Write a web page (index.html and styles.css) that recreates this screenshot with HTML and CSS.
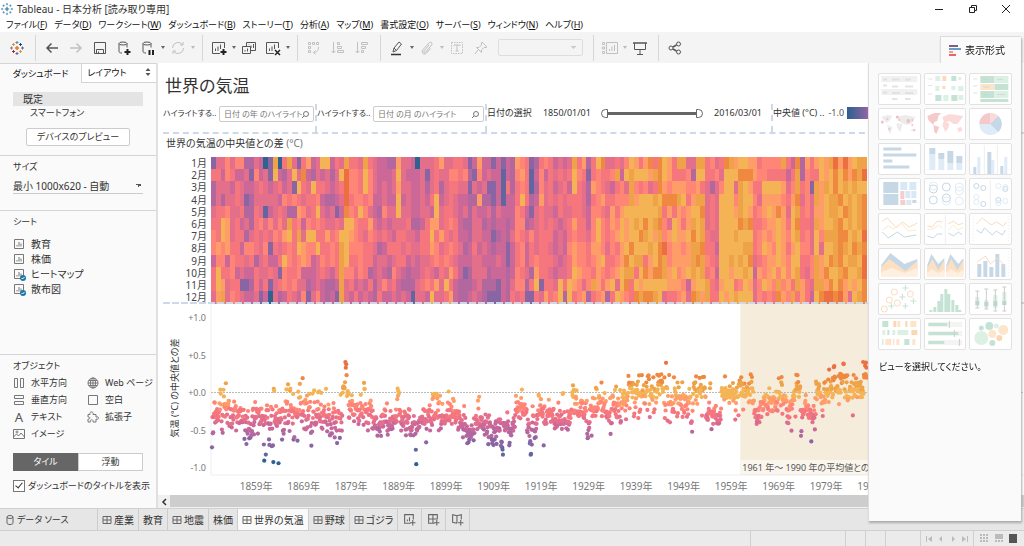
FILE: index.html
```html
<!DOCTYPE html>
<html lang="ja">
<head>
    <title>Tableau - 日本分析</title>
    <meta charset="utf-8">
    <link rel="stylesheet" href="styles.css">
</head>
<body>
    <header class="titlebar">
        <svg class="logo" width="12" height="12" viewBox="0 0 16 16"><path d="M8 5v6M5 8h6" stroke="#2f6ea5" stroke-width="1.5"/><path d="M8 0v3M6.500 1.500h3M8 13v3M6.500 14.500h3M1.500 6.500v3M0 8h3M14.500 6.500v3M13 8h3M3.500 2v3M2 3.500h3M12.500 2v3M11 3.500h3M3.500 11v3M2 12.500h3M12.500 11v3M11 12.500h3" stroke="#3f86ad"/></svg>
        <span class="title">Tableau - 日本分析 [読み取り専用]</span>
        <div class="window-buttons">
            <button aria-label="最小化"><svg width="10" height="10"><path d="M1 5.500h8" stroke="#222"/></svg></button>
            <button aria-label="元に戻す"><svg width="10" height="10" fill="none" stroke="#222"><path d="M1.500 3.500h5v5h-5zM3.500 3V1.500h5v5H7"/></svg></button>
            <button aria-label="閉じる"><svg width="10" height="10"><path d="M1 1l8 8M9 1L1 9" stroke="#222"/></svg></button>
        </div>
    </header>
    <nav class="menubar">
        <button>ファイル(<u>F</u>)</button>
        <button>データ(<u>D</u>)</button>
        <button>ワークシート(<u>W</u>)</button>
        <button>ダッシュボード(<u>B</u>)</button>
        <button>ストーリー(<u>T</u>)</button>
        <button>分析(<u>A</u>)</button>
        <button>マップ(<u>M</u>)</button>
        <button>書式設定(<u>O</u>)</button>
        <button>サーバー(<u>S</u>)</button>
        <button>ウィンドウ(<u>N</u>)</button>
        <button>ヘルプ(<u>H</u>)</button>
    </nav>
    <div class="toolbar">
        <button class="tool" aria-label="スタート ページ"><svg width="14" height="14" viewBox="0 0 14 14"><path d="M7 5v4M5 7h4" stroke="#e8762c" stroke-width="1.500"/><path d="M7 0v3M5.500 1.500h3M1.500 5.500v3M0 7h3" stroke="#5b879b"/><path d="M7 11v3M5.500 12.500h3M12.500 5.500v3M11 7h3" stroke="#5c6692"/><path d="M3.500 2v3M2 3.500h3" stroke="#eb912c"/><path d="M10.500 2v3M9 3.500h3" stroke="#1f457e"/><path d="M3.500 9v3M2 10.500h3" stroke="#c72035"/><path d="M10.500 9v3M9 10.500h3" stroke="#eb912c"/></svg></button>
        <span class="sep"></span>
        <button class="tool" aria-label="元に戻す"><svg><path d="M14 8H3M7.500 3.500L3 8l4.500 4.500" stroke-width="1.500"/></svg></button>
        <button class="tool off" aria-label="やり直し"><svg><path d="M2 8h11M8.500 3.500L13 8l-4.500 4.500" stroke-width="1.500"/></svg></button>
        <button class="tool" aria-label="保存"><svg><path d="M2.500 2.500h11v11h-11zM4.500 13V9.500h7V13M6.500 11.500v2"/></svg></button>
        <button class="tool" aria-label="新しいデータ ソース"><svg><ellipse cx="7" cy="3.500" rx="4" ry="1.500"/><path d="M3 3.500v8c0 1 1 1.500 3 1.500M11 3.500v4"/><path d="M11.500 9v6M8.500 12h6" stroke="#222" stroke-width="2"/></svg></button>
        <button class="tool" aria-label="自動更新の一時停止"><svg><ellipse cx="7" cy="3.500" rx="4" ry="1.500"/><path d="M3 3.500v8c0 1 1 1.500 3 1.500M11 3.500v4"/><path d="M9.500 10v5M13 10v5" stroke="#222" stroke-width="2"/></svg></button>
        <span class="caret"></span>
        <button class="tool off" aria-label="更新"><svg><path d="M2.500 8a5.500 5.500 0 0 1 10-3.200M13.500 8a5.500 5.500 0 0 1-10 3.200M13 2v3h-3M3 14v-3h3"/></svg></button>
        <span class="caret off"></span>
        <span class="sep"></span>
        <button class="tool" aria-label="新しいワークシート"><svg><path d="M9 13.500H1.500v-11h12V8M4.500 11V8.500M7 11V6.500M9.500 9V4.500"/><path d="M12.500 9v6M9.500 12h6" stroke="#222" stroke-width="2"/></svg></button>
        <span class="caret"></span>
        <button class="tool" aria-label="複製"><svg><path d="M5.500 6V2.500h9v8H10M1.500 6.500h8v7h-8zM8 5V4.500M10 8V5.500M12.500 8V4M4 11.500V10M6.500 11.500V8.500"/></svg></button>
        <button class="tool" aria-label="クリア"><svg><path d="M9 13.500H1.500v-11h12V8M4.500 11V8.500M7 11V6.500M9.500 9V4.500"/><path d="M10 10l5 5M15 10l-5 5" stroke="#222" stroke-width="1.500"/></svg></button>
        <span class="caret"></span>
        <span class="sep"></span>
        <button class="tool off" aria-label="行と列の入れ替え"><svg><path d="M2.500 2.500h2v2h-2zM6.500 2.500h2v2h-2zM10.500 2.500h2v2h-2zM2.500 6.500h2v2h-2zM2.500 10.500h2v2h-2zM12.500 7c0 4-2 5.500-5 5.500M9.500 10.500l-2 2 2 2"/></svg></button>
        <button class="tool off" aria-label="昇順"><svg><path d="M3.500 2v11M1.500 11l2 2 2-2M7.500 2.500h2v2h-2zM7.500 6.500h4v2h-4zM7.500 10.500h6v2h-6z"/></svg></button>
        <button class="tool off" aria-label="降順"><svg><path d="M3.500 2v11M1.500 11l2 2 2-2M7.500 2.500h6v2h-6zM7.500 6.500h4v2h-4zM7.500 10.500h2v2h-2z"/></svg></button>
        <span class="sep"></span>
        <button class="tool" aria-label="ハイライト"><svg><path d="M4 12l1-4 5-6 2.500 2-5 6.500zM5 8l2.500 2.500"/><path d="M2 14.500h10" stroke="#333" stroke-width="1.500"/></svg></button>
        <span class="caret"></span>
        <button class="tool off" aria-label="グループ"><svg><path d="M10 5l-5 6c-1 1.500.5 2.500 1.500 1.500l6-7.500c1.500-2-.5-4-2.500-2L4 9.500c-2 3 .5 6 3 4l4.500-5"/></svg></button>
        <span class="caret off"></span>
        <button class="tool off" aria-label="マーク ラベル"><svg><path d="M2.500 2.500h11v11h-11z" stroke-dasharray="1.500 1"/><path d="M5 6V5h6v1M8 5v6M6.500 11h3"/></svg></button>
        <button class="tool off" aria-label="固定"><svg><path d="M9 2l5 5-1 .5-2 0-2.500 2.500v2.500l-5-5h2.500L8.500 5V3zM5 10l-3 4"/></svg></button>
        <select class="fit" aria-label="サイズの調整" disabled></select>
        <span class="sep"></span>
        <button class="tool off" aria-label="カードの表示"><svg><path d="M.5 2.500h2v2h-2zM.5 7h2v2h-2zM.5 11.500h2v2h-2zM4.500 2.500h11v11h-11zM7.500 11V9M10 11V6.500M12.500 11V5"/></svg></button>
        <span class="caret off"></span>
        <button class="tool" aria-label="プレゼンテーション"><svg><path d="M1 3h14" stroke-width="1.500"/><path d="M2.500 3v6.500h11V3M8 10v4M5 14.500h6"/></svg></button>
        <span class="sep"></span>
        <button class="tool" aria-label="共有"><svg><circle cx="4" cy="8" r="2"/><circle cx="11.500" cy="4" r="2"/><circle cx="11.500" cy="12" r="2"/><path d="M6 7l3.500-2M6 9l3.500 2" stroke-width="1.500"/></svg></button>
    </div>

    <div class="workspace">
        <aside class="sidebar">
            <div class="side-tabs">
                <button class="side-tab active">ダッシュボード</button>
                <button class="side-tab">レイアウト <svg width="6" height="8" fill="#555"><path d="M3 0l2.500 3h-5zM3 8L.5 5h5z"/></svg></button>
            </div>
            <section class="device">
                <button class="device-row selected">既定</button>
                <button class="device-row phone">スマートフォン</button>
                <button class="preview">デバイスのプレビュー</button>
            </section>
            <section class="size">
                <h2><label for="size">サイズ</label></h2>
                <select id="size"><option>最小 1000x620 - 自動</option></select>
            </section>
            <section class="sheets">
                <h2>シート</h2>
                <ul>
                    <li><svg class="glyph" viewBox="0 0 12 12"><path d="M1.500 1.500h9v9h-9zM4 8.500V7M6 8.500V4M8 8.500V5.500"/></svg>教育</li>
                    <li><svg class="glyph" viewBox="0 0 12 12"><path d="M1.500 1.500h9v9h-9zM4 8.500V7M6 8.500V4M8 8.500V5.500"/></svg>株価</li>
                    <li class="used"><svg class="glyph" viewBox="0 0 12 12"><path d="M1.500 1.500h9v9h-9zM4 8.500V7M6 8.500V4M8 8.500V5.500"/><circle cx="10" cy="10" r="3" fill="#1f77a8" stroke="none"/><path d="M8.500 10l1 1 2-2" stroke="#fff"/></svg>ヒートマップ</li>
                    <li class="used"><svg class="glyph" viewBox="0 0 12 12"><path d="M1.500 1.500h9v9h-9zM4 8.500V7M6 8.500V4M8 8.500V5.500"/><circle cx="10" cy="10" r="3" fill="#1f77a8" stroke="none"/><path d="M8.500 10l1 1 2-2" stroke="#fff"/></svg>散布図</li>
                </ul>
            </section>
            <section class="objects">
                <h2>オブジェクト</h2>
                <ul class="object-grid">
                    <li><svg class="glyph" viewBox="0 0 12 12"><path d="M1.500 1.500h3v9h-3zM7.500 1.500h3v9h-3z"/></svg>水平方向</li>
                    <li><svg class="glyph" viewBox="0 0 12 12"><circle cx="6" cy="6" r="5"/><ellipse cx="6" cy="6" rx="2.500" ry="5"/><path d="M1 6h10M6 1v10M2 3.500h8M2 8.500h8"/></svg>Web ページ</li>
                    <li><svg class="glyph" viewBox="0 0 12 12"><path d="M1.500 1.500h9v3h-9zM1.500 7.500h9v3h-9z"/></svg>垂直方向</li>
                    <li><svg class="glyph" viewBox="0 0 12 12"><path d="M1.500 1.500h9v9h-9z"/></svg>空白</li>
                    <li><span class="glyph letter">A</span>テキスト</li>
                    <li><svg class="glyph" viewBox="0 0 12 12"><path d="M1 3.500h2c-1-3.500 4-3.500 3 0h3v2.500c3.500-1 3.500 3 0 2v3H6c1-3-3.500-3-2.500 0H1V8c2.500.5 2.500-2.500 0-2z"/></svg>拡張子</li>
                    <li><svg class="glyph" viewBox="0 0 12 12"><path d="M.5 1.500h11v9H.5zM.5 9l3-3 2 2L8 5l3.500 4"/><circle cx="4" cy="4" r="1"/></svg>イメージ</li>
                </ul>
                <div class="toggle">
                    <button class="on">タイル</button>
                    <button>浮動</button>
                </div>
                <label class="check"><input type="checkbox" checked>ダッシュボードのタイトルを表示</label>
            </section>
        </aside>

        <main class="sheet">
            <h1>世界の気温</h1>
            <div class="filters">
                <div class="filter">
                    <label for="year">ハイライトする..</label>
                    <span class="search year"><input id="year" placeholder="日付 の年 のハイライト"><svg width="7" height="7" fill="none" stroke="#777"><circle cx="4" cy="3" r="2.500"/><path d="M2 5L0 7"/></svg></span>
                </div>
                <div class="filter">
                    <label for="month">ハイライトする..</label>
                    <span class="search month"><input id="month" placeholder="日付 の月 のハイライト"><svg width="7" height="7" fill="none" stroke="#777"><circle cx="4" cy="3" r="2.500"/><path d="M2 5L0 7"/></svg></span>
                </div>
                <div class="filter dates">
                    <span>日付の選択</span>
                    <span class="date">1850/01/01</span>
                    <span class="range">
                        <input type="range" class="from" min="1850" max="2016" value="1850" aria-label="開始日">
                        <input type="range" class="to" min="1850" max="2016" value="2016" aria-label="終了日">
                    </span>
                    <span class="date">2016/03/01</span>
                </div>
                <div class="filter legend">
                    <span>中央値 (°C) ..</span>
                    <span class="low">-1.0</span>
                    <span class="ramp"></span>
                </div>
            </div>
            <h3>世界の気温の中央値との差 <span>(°C)</span></h3>
            <svg id="heatmap" class="heatmap"></svg>
            <svg id="scatter" class="scatter"></svg>
            <div class="scrollbar"><button aria-label="左へ"><svg width="6" height="8"><path d="M5 1L2 4l3 3" fill="none" stroke="#333" stroke-width="1.500"/></svg></button><span class="thumb"></span></div>
        </main>
    </div>

    <nav class="sheet-tabs">
        <button class="source"><svg viewBox="0 0 10 10"><ellipse cx="5" cy="2" rx="3" ry="1.500"/><path d="M2 2v6c0 2 6 2 6 0V2"/></svg>データ ソース</button>
        <button><svg viewBox="0 0 10 10"><path d="M1 1.500h8v7H1zM5 1.500v7M1 5h8"/></svg>産業</button>
        <button>教育</button>
        <button><svg viewBox="0 0 10 10"><path d="M1 1.500h8v7H1zM5 1.500v7M1 5h8"/></svg>地震</button>
        <button>株価</button>
        <button class="current"><svg viewBox="0 0 10 10"><path d="M1 1.500h8v7H1zM5 1.500v7M1 5h8"/></svg>世界の気温</button>
        <button><svg viewBox="0 0 10 10"><path d="M1 1.500h8v7H1zM5 1.500v7M1 5h8"/></svg>野球</button>
        <button><svg viewBox="0 0 10 10"><path d="M1 1.500h8v7H1zM5 1.500v7M1 5h8"/></svg>ゴジラ</button>
        <button class="new" aria-label="新しいワークシート"><svg viewBox="0 0 12 12"><path d="M7 9.500H1.500v-8h8V6M4 7.500V6M6 7.500V4M9 6.500v5M6.500 9h5"/></svg></button>
        <button class="new" aria-label="新しいダッシュボード"><svg viewBox="0 0 12 12"><path d="M7 9.500H1.500v-8h8V6M5.500 1.500v8M1.500 5.500h8M9 6.500v5M6.500 9h5"/></svg></button>
        <button class="new" aria-label="新しいストーリー"><svg viewBox="0 0 12 12"><path d="M5.500 9.500l-4-1v-7l4 1 4-1V6M5.500 2.500v7M9 6.500v5M6.500 9h5"/></svg></button>
    </nav>
    <footer class="status">
        <span class="cell wide"></span>
        <span class="cell"></span>
        <span class="cell"></span>
        <span class="cell mid"></span>
        <div class="cell pager">
            <svg width="8" height="8"><path d="M7 1v6L3 4zM1 1h1v6H1z"/></svg>
            <svg width="8" height="8"><path d="M5 1v6L2 4z"/></svg>
            <svg width="8" height="8"><path d="M3 1v6l3-3z"/></svg>
            <svg width="8" height="8"><path d="M1 1v6l4-3zM6 1h1v6H6z"/></svg>
        </div>
        <div class="cell views">
            <svg width="9" height="9"><path d="M0 0h2v2H0zM3 0h2v2H3zM6 0h2v2H6zM0 3h2v2H0zM3 3h2v2H3zM6 3h2v2H6zM0 6h2v2H0zM3 6h2v2H3zM6 6h2v2H6z"/></svg>
            <svg width="9" height="9"><path d="M0 0h8v5H0zM0 6h2v2H0zM3 6h2v2H3zM6 6h2v2H6z"/></svg>
            <svg width="9" height="9"><path d="M0 0h8v9H0z" fill="#555"/></svg>
        </div>
    </footer>

    <div class="show-me">
        <button class="show-me-tab"><svg width="12" height="12"><path d="M0 1h9v2H0z" fill="#7b5e8b"/><path d="M0 4h12v2H0z" fill="#6b9bc8"/><path d="M0 7h4v2H0z" fill="#f2a07a"/><path d="M0 10h7v2H0z" fill="#f0606c"/></svg>表示形式</button>
        <div class="show-me-body">
            <div class="thumbs">
                <button aria-label="テキスト表"><svg viewBox="1 1 40 30"><path d="M3 3h36v6H3zM3 16h36v6H3z" fill="#f1f1f1"/><path d="M5 6.500h4M5 12.500h4M5 19.500h4M14 6.500h7M27 6.500h6M14 13.500h6M27 13.500h8M14 20h8M27 20h8M14 26h5M27 26h5" stroke="#dcdcdc" stroke-dasharray="1.500 .5" stroke-width="2"/></svg></button>
                <button aria-label="ヒート マップ"><svg viewBox="1 1 40 30"><path d="M4 6h4M4 12.500h4M4 21h4" stroke="#e2e2e2"/><path d="M11 3h5v5h-5zM34 4h3v3h-3zM11 13h4v5h-4zM27 13h4v4h-4zM34 13h5v5h-5zM19 22h5v6h-5zM34 22h5v5h-5z" fill="#dcf0e4"/><path d="M27 3h5v5h-5zM11 22h6v6h-6zM27 22h6v6h-6z" fill="#c5e3d5"/><path d="M18 3h4v5h-4zM18 13h3v3h-3z" fill="#fcdcb8"/></svg></button>
                <button aria-label="ハイライト表"><svg viewBox="1 1 40 30"><path d="M4 6h4M4 13h4M4 20h4" stroke="#e2e2e2"/><path d="M11 3h14v7H11zM25 11h14v6H25zM11 18h14v7H11zM11 26h14v3H11zM25 26h14v3H25z" fill="#c5e3d5"/><path d="M25 3h14v7H25zM25 18h14v7H25z" fill="#dcf0e4"/><path d="M11 11h14v6H11z" fill="#fde3c8"/><path d="M14 6.500h6M28 6.500h6M14 14h6M28 14h6M14 21.500h6M28 21.500h8" stroke="#c8d8ce" stroke-dasharray="1.500 .5"/></svg></button>
                <button aria-label="記号マップ"><svg viewBox="1 1 40 30"><path d="M3 9l6-2 5 1-3 5-3 2zM9 17l5 2-2 7-2-3zM17 9l10-2 10 2-3 6-5 2-6-2zM18 15l6 1-2 8-3-4zM33 21l4 0 0 3-4-1z" fill="#ececec"/><g fill="#f2bfc3"><circle cx="4" cy="14" r="1.500"/><circle cx="9" cy="11" r="1"/><circle cx="19" cy="9" r="1.500"/><circle cx="21" cy="12" r="1"/><circle cx="30" cy="13" r="2"/><circle cx="34" cy="17" r="1"/><circle cx="36" cy="22" r="1"/><circle cx="11" cy="21" r="1"/><circle cx="34" cy="12" r="1"/></g></svg></button>
                <button aria-label="マップ"><svg viewBox="1 1 40 30"><path d="M3 8l7-3 7 0-3 3-1 5-3 1-1 3-5-5zM9 17l6 2-3 7-2-2z" fill="#f6caca"/><path d="M18 9l7-3 14 2-2 3-4 5-4 0-4-3-5 2zM19 14l6 1-1 5-3 4-3-7zM33 20l4-1 1 4-4 1z" fill="#fddada"/></svg></button>
                <button aria-label="円グラフ"><svg viewBox="1 1 40 30"><circle cx="21" cy="16" r="11" fill="#dfecf8"/><path d="M21 16V5a11 11 0 0 0-11 11z" fill="#f5c9c9"/><path d="M21 16V5a11 11 0 0 1 8 3z" fill="#fcdada"/><path d="M21 16l8-8a11 11 0 0 1 0 16z" fill="#c6d7e5"/></svg></button>
                <button aria-label="横棒"><svg viewBox="1 1 40 30"><path d="M5 6h18M5 12h33M5 18h9M5 24h26" stroke="#c6d7e5" stroke-width="3"/></svg></button>
                <button aria-label="積み上げ棒"><svg viewBox="1 1 40 30"><path d="M5 11h6v16H5zM14 16h6v11h-6zM23 20h6v7h-6zM32 20h6v7h-6z" fill="#dfecf8"/><path d="M5 5h6v6H5zM14 10h6v6h-6zM23 8h6v12h-6zM32 13h6v7h-6z" fill="#c6d7e5"/></svg></button>
                <button aria-label="並列棒"><svg viewBox="1 1 40 30"><path d="M15 2v29M28 2v29" stroke="#eee"/><path d="M8 14h3v17H8zM22 17h3v14h-3zM35 14h3v17h-3z" fill="#dfecf8"/><path d="M4 24h3v7H4zM18 9h4v22h-4zM31 23h3v8h-3z" fill="#c6d7e5"/></svg></button>
                <button aria-label="ツリーマップ"><svg viewBox="1 1 40 30"><path d="M5 4h15v11H5zM5 16h15v11H5z" fill="#c6d7e5"/><path d="M22 4h7v8h-7zM31 4h7v8h-7zM27 13h5v7h-5zM33 13h5v7h-5zM28 22h5v5h-5z" fill="#d9e8f5"/><path d="M22 13h4v8h-4zM22 22h5v5h-5z" fill="#f8cccc"/><path d="M34 22h4v3h-4z" fill="#c6d7e5"/></svg></button>
                <button aria-label="円ビュー"><svg viewBox="1 1 40 30" fill="none" stroke="#c6d7e5"><circle cx="9" cy="11" r="4"/><circle cx="9" cy="22" r="4"/><circle cx="22" cy="9" r="4"/><circle cx="22" cy="20" r="4"/><g stroke="#dfecf8"><circle cx="9" cy="8" r="4"/><circle cx="22" cy="23" r="4"/><circle cx="35" cy="9" r="4"/><circle cx="35" cy="13" r="4"/><circle cx="35" cy="23" r="4"/></g></svg></button>
                <button aria-label="並列の円"><svg viewBox="1 1 40 30" fill="none" stroke="#c6d7e5"><path d="M21 2v29" stroke="#eee"/><circle cx="7" cy="8" r="2.500"/><circle cx="14" cy="10" r="2.500"/><circle cx="14" cy="26" r="2.500"/><circle cx="36" cy="11" r="2.500"/><circle cx="29" cy="22" r="2.500"/><g stroke="#dfecf8"><circle cx="7" cy="19" r="2.500"/><circle cx="7" cy="24" r="2.500"/><circle cx="29" cy="8" r="2.500"/><circle cx="36" cy="9" r="2.500"/><circle cx="29" cy="25" r="2.500"/><circle cx="36" cy="23" r="2.500"/></g></svg></button>
                <button aria-label="線 (連続)"><svg viewBox="1 1 40 30" fill="none"><path d="M4 8l5-3 9 10 6-6 7 5 8-4" stroke="#fbdcc0"/><path d="M4 17l6-4 5 3 8-6 7 8 8-1" stroke="#fdeacb"/><path d="M4 19l6 6 9-6 7 5 12-2" stroke="#c6d7e5"/></svg></button>
                <button aria-label="線 (不連続)"><svg viewBox="1 1 40 30" fill="none"><path d="M21 2v29" stroke="#eee"/><path d="M3 13l5 1 5-6 5 1M24 11l5-3 5 4 5-2" stroke="#fbdcc0"/><path d="M3 16l6 0 5-4 4 3M24 17l5-5 5 5 5-3" stroke="#fdeacb"/><path d="M3 23l6 2 4-4 5 0M24 20l5 3 5-4 4 3" stroke="#c6d7e5"/></svg></button>
                <button aria-label="二重線"><svg viewBox="1 1 40 30" fill="none"><path d="M4 3v26M39 3v26" stroke="#ececec" stroke-dasharray="1 2"/><path d="M7 11l6-6 9 7 5-3 7 4 3-4" stroke="#fbdcc0"/><path d="M7 17l5 3 3-5 8 7 4-4 6 4 3-5" stroke="#c6d7e5"/></svg></button>
                <button aria-label="エリア (連続)"><svg viewBox="1 1 40 30"><path d="M3 17L12 5l14 11 13-5v12L3 28z" fill="#c6d7e5"/><path d="M3 19l8-8 16 12 12-10v16H3z" fill="#fde0c2"/><path d="M3 24l11-4 12 5 13-5v9H3z" fill="#fef0e0"/></svg></button>
                <button aria-label="エリア (不連続)"><svg viewBox="1 1 40 30"><path d="M3 17L7 6l7 10 6-6v14H3zM22 17l4-11 8 10 5-6v14H22z" fill="#c6d7e5"/><path d="M3 20l5-9 6 11 6-10v17H3zM22 20l5-9 6 11 6-10v17H22z" fill="#fde0c2"/><path d="M3 25l4-4 7 4 6-3v7H3zM22 25l4-4 7 4 6-3v7H22z" fill="#fef0e0"/></svg></button>
                <button aria-label="二重組み合わせ"><svg viewBox="1 1 40 30"><path d="M8 16h4v13H8zM14 13h4v16h-4zM20 19h4v10h-4zM26 6h4v23h-4zM32 16h4v13h-4z" fill="#c6d7e5"/><path d="M39 3v26" stroke="#ececec" stroke-dasharray="1 2"/><path d="M8 14l8-6 5 8 7-6 7 7" fill="none" stroke="#fbdcc0"/></svg></button>
                <button aria-label="散布図"><svg viewBox="1 1 40 30" fill="none"><g stroke="#fbdcc0"><circle cx="16" cy="9" r="3"/><circle cx="32" cy="11" r="3"/><circle cx="11" cy="17" r="3"/><circle cx="19" cy="20" r="3"/><circle cx="6" cy="26" r="3"/></g><path d="M27 2v6M24 5h6M24 11v6M21 14h6M35 15v6M32 18h6M27 20v6M24 23h6M13 20v6M10 23h6" stroke="#c5e3d5"/></svg></button>
                <button aria-label="ヒストグラム"><svg viewBox="1 1 40 30"><path d="M5 27h3v2H5zM9 24h3v5H9zM13 18h3v11h-3zM16 11h3v18h-3zM20 6h3v23h-3zM23 11h3v18h-3zM27 17h3v12h-3zM31 22h3v7h-3zM34 27h3v2h-3z" fill="#c5e3d5"/></svg></button>
                <button aria-label="箱ヒゲ図"><svg viewBox="1 1 40 30"><path d="M6 14h4v9H6zM15 17h4v8h-4zM24 12h4v13h-4zM33 9h4v13h-4z" fill="#dcf0e4"/><path d="M6 18h4v4H6zM15 19h4v4h-4zM24 18h4v5h-4zM33 18h4v4h-4z" fill="#b5dccb"/><path d="M8 8v17M17 6v20M26 7v21M35 4v24M6 8h4M15 6h4M24 7h4M33 4h4M6 25h4M15 26h4M24 28h4M33 28h4" stroke="#ccc"/></svg></button>
                <button aria-label="ガント"><svg viewBox="1 1 40 30"><path d="M4 3h6v6H4zM9 12h2v5H9zM26 21h5v6h-5zM4 21h1v6H4z" fill="#c5e3d5"/><path d="M15 3h3v6h-3zM33 12h6v5h-6zM27 3h2v6h-2zM15 21h1v6h-1z" fill="#fbd6b4"/><path d="M4 12h3v5H4zM14 12h3v5h-3zM19 12h11v5H19z" fill="#dcf0e4"/><path d="M19 3h3v6h-3zM32 3h6v6h-6zM7 21h6v6H7zM18 21h3v6h-3zM34 21h3v6h-3z" fill="#fde5cc"/></svg></button>
                <button aria-label="ブレット"><svg viewBox="1 1 40 30"><path d="M4 4h34v5H4zM4 13h34v5H4zM4 22h34v5H4z" fill="#f4f4f4"/><path d="M4 6.500h19M4 15.500h30M4 24.500h16" stroke="#c5e3d5" stroke-width="3"/><path d="M25 3v7M30 12v7M35 21v7" stroke="#ccc"/></svg></button>
                <button aria-label="パックバブル"><svg viewBox="1 1 40 30"><circle cx="12" cy="20" r="7" fill="#dcf0e4"/><circle cx="27" cy="8" r="2.500" fill="#dcf0e4"/><circle cx="20" cy="8" r="4" fill="#c5e3d5"/><circle cx="12" cy="10" r="2.500" fill="#c5e3d5"/><circle cx="23" cy="25" r="3" fill="#c5e3d5"/><circle cx="34" cy="12" r="5" fill="#fde5cc"/><circle cx="23" cy="16" r="4" fill="#fde5cc"/><circle cx="30" cy="20" r="3" fill="#fbd6b4"/></svg></button>
            </div>
            <p>ビューを選択してください。</p>
        </div>
    </div>
    <script src="script.js"></script>
</body>
</html>
```
FILE: styles.css
```css
html, body {
    height: 100%;
}

body {
    position: relative;
    display: flex;
    flex-direction: column;
    margin: 0;
    overflow: hidden;
    background: #fff;
    color: #333;
    font-family: "Noto Sans", "Noto Sans CJK JP", sans-serif;
    font-size: 10px;
    font-feature-settings: "palt";
    line-height: 14px;
}

button, input, select {
    margin: 0;
    padding: 0;
    border: 0;
    background: none;
    color: inherit;
    font: inherit;
    font-feature-settings: inherit;
    white-space: nowrap;
}

h1, h2, h3, p, ul {
    margin: 0;
    padding: 0;
    font-weight: normal;
    list-style: none;
}

/* title and menu */
.titlebar {
    display: flex;
    align-items: center;
    flex: none;
    height: 17px;
    padding-left: 1px;
}

.titlebar .title {
    margin-left: 4px;
}

.window-buttons {
    display: flex;
    margin-left: auto;
    padding-right: 8px;
}

.window-buttons button {
    width: 34px;
    height: 16px;
}

.window-buttons button:last-child {
    width: 20px;
    margin-left: 6px;
}

.window-buttons svg {
    display: block;
    margin: auto;
}

.menubar {
    display: flex;
    flex: none;
    gap: 7px;
    height: 15px;
    padding-left: 6px;
    color: #111;
    font-size: 9px;
}

/* toolbar */
.toolbar {
    display: flex;
    align-items: center;
    flex: none;
    height: 31px;
    padding-left: 5px;
    background: #f4f4f4;
}

.tool {
    flex: none;
    width: 24px;
    height: 24px;
}

.tool svg {
    display: block;
    margin: auto;
}

.toolbar svg:not([width]) {
    width: 16px;
    height: 16px;
    fill: none;
    stroke: #555;
}

.toolbar .off svg {
    stroke: #c0c0c0;
}

.caret {
    flex: none;
    width: 6px;
    height: 3px;
    background: #666;
    clip-path: polygon(1px 0, 5px 0, 3px 3px);
}

.caret.off {
    background: #bbb;
}

.sep {
    flex: none;
    width: 1px;
    height: 26px;
    margin: 0 4px 0 6px;
    background: #d6d6d6;
}

.fit {
    width: 85px;
    height: 17px;
    margin: 0 4px 0 5px;
    appearance: none;
    border: 1px solid #d4d4d4;
    border-radius: 2px;
    background: linear-gradient(45deg, transparent 50%, #bbb 50%) right 8px center / 3px 3px no-repeat, linear-gradient(-45deg, transparent 50%, #bbb 50%) right 5px center / 3px 3px no-repeat;
}

/* left pane */
.workspace {
    display: flex;
    flex: 1;
    min-height: 0;
}

.sidebar {
    display: flex;
    flex-direction: column;
    flex: none;
    width: 156px;
    border-right: 2px solid #e0e0e0;
    background: #fafafa;
}

.side-tabs {
    display: flex;
    height: 20px;
}

.side-tab {
    flex: 1;
    border: solid #d4d4d4;
    border-width: 1px 0 1px 1px;
    background: #fff;
    color: #111;
    font-size: 9px;
}

.side-tab svg {
    margin-left: 16px;
}

.side-tab.active {
    flex: none;
    width: 81px;
    border-width: 1px 0 0;
    background: none;
}

.sidebar section {
    padding: 4px 13px 0;
    border-bottom: 1px solid #d4d4d4;
}

.sidebar h2 {
    font-size: 9px;
}

.sidebar .device {
    height: 63px;
    padding-top: 9px;
}

.device-row {
    display: block;
    width: 130px;
    height: 14px;
    padding-left: 10px;
    text-align: left;
}

.device-row.selected {
    background: #e4e4e4;
}

.device-row.phone {
    padding-left: 17px;
    font-size: 9px;
}

.preview {
    width: 104px;
    height: 18px;
    margin: 8px 13px 0;
    border: 1px solid #ccc;
    border-radius: 2px;
    background: #fff;
    font-size: 9px;
}

.sidebar .size {
    height: 50px;
}

.size select {
    width: 130px;
    height: 16px;
    margin-top: 4px;
    appearance: none;
    border-bottom: 1px solid #ccc;
    background: linear-gradient(45deg, transparent 50%, #555 50%) right 4px center / 3px 3px no-repeat, linear-gradient(-45deg, transparent 50%, #555 50%) right 1px center / 3px 3px no-repeat;
}

.sidebar .sheets {
    flex: 1;
}

.sheets ul {
    margin-top: 7px;
}

.sidebar li {
    display: flex;
    align-items: center;
    gap: 6px;
    height: 15px;
    white-space: nowrap;
}

.glyph {
    flex: none;
    width: 12px;
    height: 12px;
    overflow: visible;
    fill: none;
    stroke: #777;
}

.letter {
    color: #555;
    font-size: 13px;
    line-height: 12px;
    text-align: center;
}

.sidebar .objects {
    padding-bottom: 15px;
    border-bottom: 0;
}

.object-grid {
    display: grid;
    grid-template-columns: 74px auto;
    margin-top: 1px;
    font-size: 9px;
}

.object-grid li {
    height: 17px;
}

.toggle {
    display: flex;
    width: 130px;
    height: 18px;
    margin-top: 11px;
}

.toggle button {
    flex: 1;
    border: 1px solid #ccc;
    background: #fff;
    font-size: 9px;
}

.toggle .on {
    border-color: #666;
    background: #666;
    color: #fff;
}

.check {
    display: flex;
    align-items: center;
    gap: 3px;
    margin-top: 8px;
    font-size: 9px;
    white-space: nowrap;
}

.check input {
    flex: none;
    width: 12px;
    height: 12px;
    appearance: none;
    border: 1px solid #777;
    background: #fff;
}

.check input:checked::before {
    content: "";
    display: block;
    width: 3px;
    height: 6px;
    margin: 0 auto;
    border: solid #333;
    border-width: 0 1px 1px 0;
    transform: rotate(40deg);
}

/* dashboard */
.sheet {
    display: flex;
    flex-direction: column;
    flex: 1;
    min-width: 0;
    overflow: hidden;
}

.sheet h1 {
    padding: 10px 0 6px 7px;
    font-size: 17px;
    line-height: 25px;
}

.filters {
    display: flex;
    height: 28px;
    margin-left: 5px;
    border-bottom: 2px dashed #cdd8e8;
}

.filter {
    display: flex;
    align-items: flex-start;
    box-sizing: border-box;
    flex: none;
    width: 170px;
    padding-right: 1px;
    border-right: 2px dashed #cdd8e8;
    font-size: 9px;
    line-height: 18px;
    white-space: nowrap;
}

.filter:first-child {
    width: 154px;
}

.filter.dates {
    width: 286px;
}

.filter.legend {
    flex: 1;
    border-right: 0;
}

.filter label {
    flex: 1;
    font-size: 8px;
}

.search {
    display: flex;
    align-items: center;
    box-sizing: border-box;
    flex: none;
    width: 95px;
    height: 16px;
    margin-top: 2px;
    padding: 0 4px;
    border: 1px solid #ccc;
    border-radius: 2px;
}

.search.month {
    width: 111px;
}

.search input {
    flex: 1;
    width: 0;
    outline: 0;
    font-size: 8px;
}

.search input::placeholder {
    color: #777;
    opacity: 1;
}

.date {
    margin-left: auto;
}

.dates .date:last-child {
    margin-right: 8px;
}

.range {
    display: grid;
    width: 102px;
    margin: 5px 0 0 10px;
    background: linear-gradient(#666, #666) center / 92px 3px no-repeat;
}

.range input {
    grid-area: 1 / 1;
    width: 100%;
    height: 9px;
    appearance: none;
    pointer-events: none;
}

.range input::-webkit-slider-thumb {
    width: 7px;
    height: 9px;
    appearance: none;
    pointer-events: auto;
    border: 1px solid #666;
    border-radius: 5px 0 0 5px;
    background: #fff;
}

.range .to::-webkit-slider-thumb {
    border-radius: 0 5px 5px 0;
}

.legend .low {
    margin-left: 4px;
    color: #555;
}

.ramp {
    width: 100px;
    height: 12px;
    margin: 3px 0 0 3px;
    background: linear-gradient(90deg, #2c6090, #8d64a4 20px, #c0659c 40px, #ff8674, #f5b556);
}

.sheet h3 {
    padding: 0 0 5px 8px;
    font-size: 10px;
    line-height: 18px;
}

.sheet h3 span {
    color: #777;
}

.heatmap {
    flex: none;
    width: 100%;
    height: 147px;
    fill: #444;
}

.heatmap rect {
    shape-rendering: crispEdges;
}

.scatter {
    flex: 1;
    width: 100%;
    min-height: 0;
    fill: #777;
}

.scrollbar {
    display: flex;
    flex: none;
    height: 13px;
    background: #f0f0f0;
}

.scrollbar button {
    width: 12px;
}

.thumb {
    flex: 1;
    height: 12px;
    background: #cdcdcd;
}

/* bottom bars */
.sheet-tabs {
    display: flex;
    box-sizing: border-box;
    flex: none;
    height: 23px;
    border-top: 1px solid #d0d0d0;
    border-bottom: 1px solid #d0d0d0;
    background: #e6e6e6;
}

.sheet-tabs button {
    display: flex;
    align-items: center;
    gap: 2px;
    padding: 0 4px;
    border-right: 1px solid #ccc;
}

.sheet-tabs .source {
    box-sizing: border-box;
    width: 98px;
    padding-left: 5px;
    font-size: 9px;
}

.sheet-tabs .current {
    background: #fafafa;
}

.sheet-tabs svg {
    width: 10px;
    height: 10px;
    fill: none;
    stroke: #666;
}

.sheet-tabs .new {
    padding: 0 5px;
}

.sheet-tabs .new svg {
    width: 13px;
    height: 13px;
}

.status {
    display: flex;
    justify-content: flex-end;
    flex: none;
    height: 15px;
    background: #ebebeb;
}

.cell {
    box-sizing: border-box;
    width: 20px;
    border-left: 1px solid #d0d0d0;
    fill: #bbb;
}

.cell.wide {
    width: 95px;
}

.cell.mid {
    width: 35px;
}

.pager, .views {
    display: flex;
    align-items: center;
    justify-content: space-evenly;
}

.pager {
    width: 53px;
}

.views {
    width: 51px;
}

/* floating "show me" panel */
.show-me {
    position: absolute;
    top: 36px;
    right: 3px;
    bottom: 25px;
    display: flex;
    flex-direction: column;
    width: 153px;
    filter: drop-shadow(1px 2px 1px #aaa);
}

.show-me-tab {
    display: flex;
    align-items: center;
    align-self: flex-end;
    gap: 4px;
    box-sizing: border-box;
    width: 81px;
    height: 27px;
    padding-left: 8px;
    border: solid #ddd;
    border-width: 1px 0 0 1px;
    background: #fafafa;
    color: #111;
}

.show-me-body {
    flex: 1;
    padding: 10px 9px;
    border-left: 1px solid #ddd;
    background: #fafafa;
}

.thumbs {
    display: grid;
    grid-template-columns: repeat(3, 1fr);
    gap: 3px;
}

.thumbs button {
    box-sizing: border-box;
    height: 32px;
    border: 1px solid #e2e2e2;
    border-radius: 2px;
    background: #fff;
}

.thumbs svg {
    display: block;
    width: 100%;
    height: 100%;
}

.show-me p {
    margin-top: 10px;
    padding-left: 1px;
    color: #111;
    font-size: 9px;
}
```
FILE: script.js
```js
// One string per month, one character per year from 1850, grouped by decade.
// 0 = coldest, c = warmest.
var months = [
    '2557577335 402a06a526 84599465a6 65a6544338 5540555685 5665248442 4243876236 764545a683 69b5565798 68b6b986aa 55aa6756ba 8998867777 a64b386898 ac8c89aa',
    '6647644527 452943595b 43545359c7 7697544459 5444525655 7767327454 4143786147 4656569762 67667a49a9 998ab98666 7399667599 9bbb877666 646a376698 9b9b8bac',
    '3555465445 6545645296 59665456c7 7697545458 5544535635 6655254522 4163676137 5645649653 8765467 5a7 6756b87888 7786535799 5a98669999 857a672a8a 9b9a9a99',
    '3535565235 5555476765 66743345c6 7767445449 4544546945 6544338332 4144696348 5656566653 67866777a8 999a9bbba9 68aa565999 7a99758888 768b575a89 aab9a9ab',
    '5667556336 5145653387 56954524b7 6975437559 5544554956 6545354453 5444764256 5546556654 7765868999 9999a68687 899b565999 8a9867898b 859a675889 aa9ba9ab',
    '6698564536 757575a674 7676556599 7668545455 5633468856 7643355343 4434773456 5654568664 797687989a 9b9ab75986 8a9a565999 9bab667889 869b665a89 9ab9a9ab',
    '7698566356 56576896a5 9966867998 7657656546 6554669686 5644355442 3435765756 6645467665 7976789899 ba98a78988 9b9a655999 a999678789 879a67597a aabb9a9c',
    '7878664776 5726567698 7796676a97 7766534666 5655668756 7653464543 4424674656 6545478776 88757689b9 99a9bc7887 8aab664999 99aa679879 8689775959 9aba9bab',
    '4774766563 5644697678 7457676a96 6766455456 6454556767 6544455444 5424674676 6654568776 7896678b9a a689ba7888 8aba76599a 9a9b567889 8799667a89 bab9aa9c',
    '6966745446 5565276674 4456546a77 5763454375 4344565465 8642355534 4434765386 6545569877 6876789aa6 9b8bba8978 9a9a674998 99a9487897 979a657a8b 99ab99ac',
    '6985662236 4625676755 3454334a56 4546357564 3335676859 6433345333 2435773692 6659698757 a868959b69 8999998887 4899a65899 679857987a 786a865aa8 b9b8989b',
    '58a5765445 2405346547 2574342a54 6454364454 5415549556 8433454322 2436562265 8679396783 678369876b abba956678 5ba8a66989 a99957676b 87a68649bc cbc859ab'
];

var palette = { 0: '#2f6191', 1: '#6265a0', 2: '#8965a4', 3: '#b2679f', 4: '#cc6897', 5: '#e46f8b', 6: '#f6767e',
    7: '#ff8676', 8: '#fe9d68', 9: '#f4b455', a: '#efa349', b: '#ef893f', c: '#ec6f42' };
var degrees = { 0: -0.92, 1: -0.76, 2: -0.66, 3: -0.53, 4: -0.44, 5: -0.35, 6: -0.27,
    7: -0.18, 8: -0.09, 9: 0, a: 0.09, b: 0.19, c: 0.35 };

var LEFT = 53, YEAR = 4.75, ROW = 12.2;
var ZERO = 89, UNIT = 75;

function add(parent, name, attrs, text) {
    var el = document.createElementNS('http://www.w3.org/2000/svg', name);
    for (var key in attrs) {
        el.setAttribute(key, attrs[key]);
    }
    if (text) {
        el.textContent = text;
    }
    parent.appendChild(el);
    return el;
}

// small repeatable spread, so the dots do not line up
var seed = 7;
function spread() {
    seed = (seed * 16807) % 2147483647;
    return seed / 2147483647 - 0.5;
}

var heat = document.getElementById('heatmap');
var scatter = document.getElementById('scatter');

add(scatter, 'rect', { x: LEFT + 111 * YEAR + 2, y: 0, width: 30 * YEAR, height: 171, fill: '#f5ecdc' });
add(scatter, 'rect', { x: LEFT + 111 * YEAR + 2, y: 156, width: 30 * YEAR, height: 14, fill: '#faf6ee' });
add(scatter, 'path', { d: 'M' + LEFT + ' 0V171H1000', stroke: '#eee', fill: 'none' });
add(scatter, 'path', { d: 'M' + LEFT + ' ' + (ZERO - 0.5) + 'H1000', stroke: '#bbb', 'stroke-dasharray': '2 1' });

months.forEach(function (row, m) {
    var levels = row.replace(/ /g, '').split('');
    add(heat, 'text', { x: LEFT - 4, y: m * ROW + 10, 'text-anchor': 'end', 'font-size': 10 }, (m + 1) + '月');
    levels.forEach(function (level, y) {
        add(heat, 'rect', { x: LEFT + y * YEAR, y: m * ROW, width: YEAR + 0.3, height: ROW + 0.3, fill: palette[level] });
        add(scatter, 'circle', {
            cx: LEFT + (y + m / 12) * YEAR + 1,
            cy: ZERO - (degrees[level] + spread() * 0.13) * UNIT,
            r: 2.1,
            fill: palette[level]
        });
    });
});
add(heat, 'path', { d: 'M5 146H1000', stroke: '#cdd8e8', 'stroke-width': 2, 'stroke-dasharray': '7 2' });

['+1.0', '+0.5', '+0.0', '-0.5', '-1.0'].forEach(function (label, i) {
    add(scatter, 'text', { x: LEFT - 5, y: 17 + i * 37.5, 'text-anchor': 'end', 'font-size': 9 }, label);
});
for (var year = 1859; year < 1995; year += 10) {
    add(scatter, 'text', { x: LEFT + (year - 1850 + 0.5) * YEAR, y: 186, 'text-anchor': 'middle', 'font-size': 10 }, year + '年');
}
add(scatter, 'text', { transform: 'translate(20 84) rotate(-90)', 'text-anchor': 'middle', 'font-size': 9, fill: '#333' }, '気温 (°C) の中央値との差');
add(scatter, 'text', { x: LEFT + 111 * YEAR + 4, y: 167, 'font-size': 9, fill: '#555' }, '1961 年～ 1990 年の平均値との比較');
```
